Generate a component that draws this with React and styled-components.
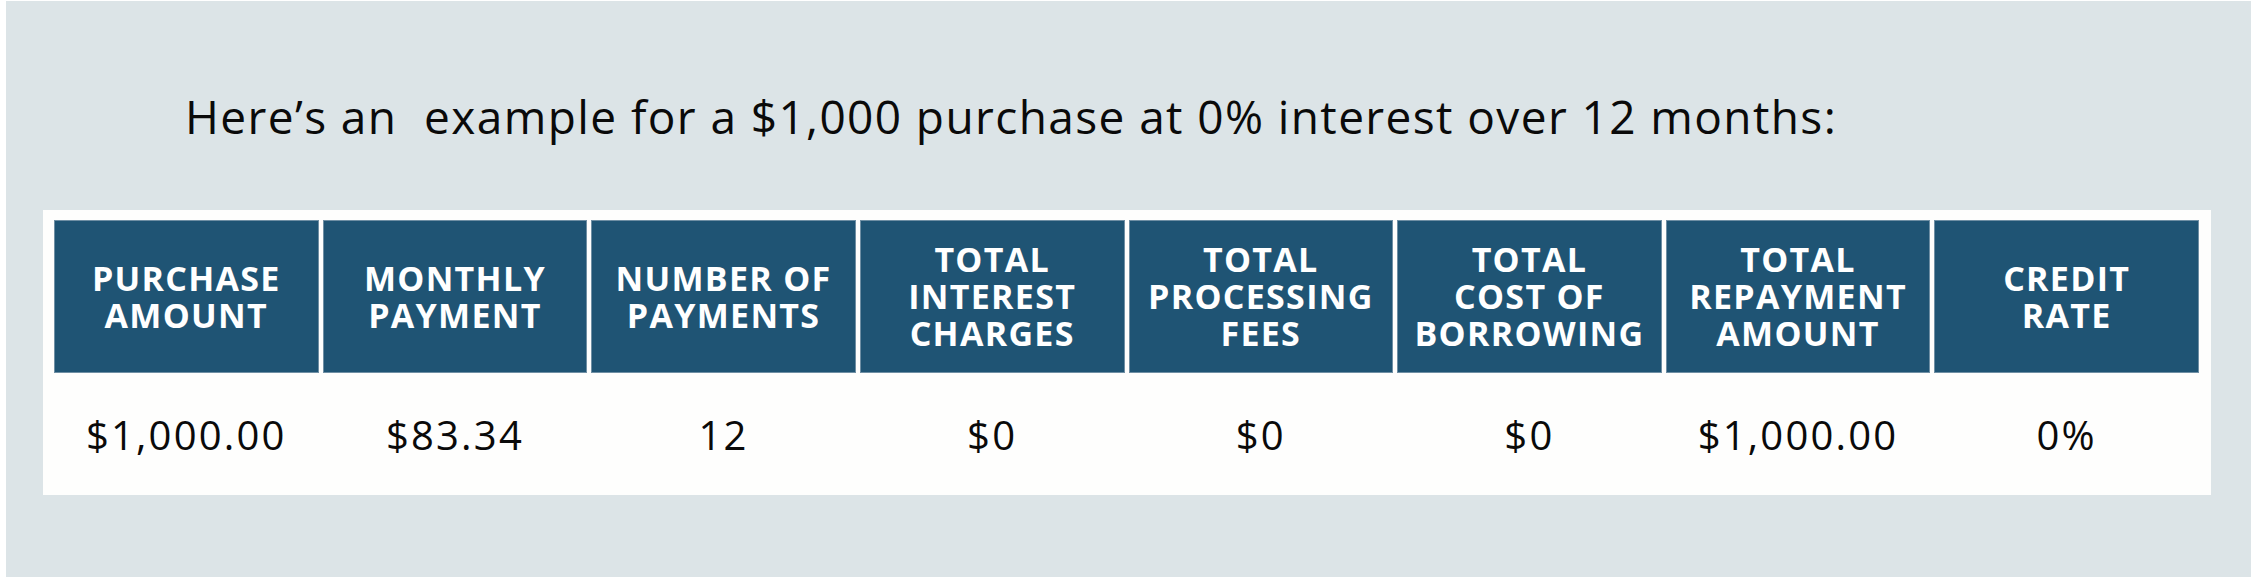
import styled, { createGlobalStyle } from "styled-components";

const GlobalStyle = createGlobalStyle`
  body {
    margin: 0;
    background: #ffffff;
    font-family: "Open Sans", "Liberation Sans", sans-serif;
  }
`;

const columns = [
  { label: ['PURCHASE', 'AMOUNT'], value: '$1,000.00' },
  { label: ['MONTHLY', 'PAYMENT'], value: '$83.34' },
  { label: ['NUMBER OF', 'PAYMENTS'], value: '12' },
  { label: ['TOTAL', 'INTEREST', 'CHARGES'], value: '$0' },
  { label: ['TOTAL', 'PROCESSING', 'FEES'], value: '$0' },
  { label: ['TOTAL', 'COST OF', 'BORROWING'], value: '$0' },
  { label: ['TOTAL', 'REPAYMENT', 'AMOUNT'], value: '$1,000.00' },
  { label: ['CREDIT', 'RATE'], value: '0%' }
];

export default function App() {
  return (
    <>
      <GlobalStyle />
      <Frame>
        <Banner>
          <Title>Here’s an&nbsp; example for a $1,000 purchase at 0% interest over 12 months:</Title>

          <Panel>
            <Grid>
              {columns.map((col) => (
                <HeadCell key={col.label.join(' ')}>
                  {col.label.map((line) => (
                    <HeadLine key={line}>{line}</HeadLine>
                  ))}
                </HeadCell>
              ))}

              {columns.map((col, i) => (
                <ValueCell key={i}>{col.value}</ValueCell>
              ))}
            </Grid>
          </Panel>
        </Banner>
      </Frame>
    </>
  );
}

const Frame = styled.div`
  padding: 1px 0 2px 6px;
`;

const Banner = styled.section`
  background: #dce4e7;
  box-sizing: border-box;
  display: flex;
  flex-direction: column;
  height: 576px;
  padding: 85px 40px 0 37px;
`;

const Title = styled.h2`
  color: #0a0a0a;
  font-size: 46px;
  font-weight: 500;
  letter-spacing: 1.4px;
  line-height: 60px;
  margin: 0 0 64px 142px;
  white-space: pre;
`;

const Panel = styled.div`
  background: #fefefd;
  padding: 10px 12px 0 11px;
`;

const Grid = styled.div`
  column-gap: 4px;
  display: grid;
  grid-template-columns: repeat(8, 1fr);
  grid-template-rows: 153px 122px;
`;

const HeadCell = styled.div`
  align-items: center;
  background: #1f5474;
  border: 1px solid #6f8fa4;
  color: #ffffff;
  display: flex;
  flex-direction: column;
  font-size: 34px;
  font-weight: 700;
  justify-content: center;
  letter-spacing: 1.3px;
`;

const HeadLine = styled.span`
  display: block;
  height: 37px;
  line-height: 37px;
`;

const ValueCell = styled.div`
  align-items: center;
  color: #0a0a0a;
  display: flex;
  font-size: 40px;
  font-weight: 500;
  justify-content: center;
  letter-spacing: 2.2px;
`;
